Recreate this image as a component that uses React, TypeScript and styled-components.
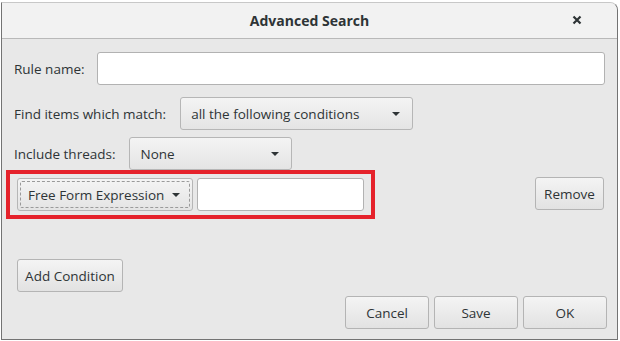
import React from "react";
import styled, { createGlobalStyle } from "styled-components";

const GlobalStyle = createGlobalStyle`
    html, body {
        margin: 0;
        padding: 0;
        background: #ffffff;
    }
    body {
        font-family: "Open Sans", "Noto Sans", sans-serif;
        font-size: 13.5px;
        color: #2e3436;
    }
`;

const Caret: React.FC = () => (
    <svg width="10" height="6" viewBox="0 0 10 6">
        <path d="M1 1 L9 1 L5 5 Z" fill="#2e3436" />
    </svg>
);

const App: React.FC = () => {
    return (
        <>
            <GlobalStyle />
            <Screen>
                <Window>
                    <TitleBar>
                        <Title>Advanced Search</Title>
                        <CloseButton type="button" aria-label="Close">
                            <svg width="10" height="10" viewBox="0 0 10 10">
                                <path d="M1.5 1.5 L8.5 8.5 M8.5 1.5 L1.5 8.5" stroke="#2e3436" strokeWidth="2.2" />
                            </svg>
                        </CloseButton>
                    </TitleBar>
                    <Body>
                        <Row $gap={12}>
                            <Label>Rule name:</Label>
                            <TextInput $grow />
                        </Row>
                        <Row $gap={14} $top={12}>
                            <Label>Find items which match:</Label>
                            <Dropdown $width={233}>
                                <span>all the following conditions</span>
                                <Caret />
                            </Dropdown>
                        </Row>
                        <Row $gap={14} $top={7}>
                            <Label>Include threads:</Label>
                            <Dropdown $width={163}>
                                <span>None</span>
                                <Caret />
                            </Dropdown>
                        </Row>
                        <ConditionRow>
                            <Highlight>
                                <Dropdown $width={176} $focused>
                                    <span>Free Form Expression</span>
                                    <Caret />
                                </Dropdown>
                                <TextInput $width={167} />
                            </Highlight>
                            <RemoveButton $width={69}>Remove</RemoveButton>
                        </ConditionRow>
                        <AddButton $width={106}>Add Condition</AddButton>
                        <Actions>
                            <Button $width={84}>Cancel</Button>
                            <Button $width={84}>Save</Button>
                            <Button $width={84}>OK</Button>
                        </Actions>
                    </Body>
                </Window>
            </Screen>
        </>
    );
};

const Screen = styled.div`
    width: 620px;
    height: 341px;
    padding: 2px 0 0 1px;
    box-sizing: border-box;
    background: #ffffff;
`;

const Window = styled.div`
    display: flex;
    flex-direction: column;
    width: 617px;
    height: 338px;
    box-sizing: border-box;
    border: 1px solid #737373;
    border-top-color: #c8c8c8;
    border-radius: 0 8px 0 0;
    background: #e8e8e8;
    overflow: hidden;
`;

const TitleBar = styled.div`
    position: relative;
    display: flex;
    align-items: center;
    justify-content: center;
    height: 35px;
    flex-shrink: 0;
    background: #f2f2f2;
    border-bottom: 1px solid #b9b9b9;
`;

const Title = styled.h1`
    margin: 0;
    font-size: 14px;
    font-weight: 700;
    color: #2e3436;
`;

const CloseButton = styled.button`
    position: absolute;
    right: 35px;
    top: 12px;
    display: flex;
    padding: 0;
    border: none;
    background: none;
`;

const Body = styled.div`
    display: flex;
    flex-direction: column;
    align-items: flex-start;
    flex: 1;
    padding: 13px 12px 0 12px;
`;

const Row = styled.div<{ $gap: number; $top?: number }>`
    display: flex;
    align-items: center;
    align-self: stretch;
    gap: ${(p) => p.$gap}px;
    margin-top: ${(p) => p.$top ?? 0}px;
`;

const Label = styled.span`
    white-space: nowrap;
`;

const TextInput = styled.div<{ $grow?: boolean; $width?: number }>`
    ${(p) => (p.$grow ? "flex: 1;" : `width: ${p.$width}px;`)}
    height: 33px;
    box-sizing: border-box;
    background: #ffffff;
    border: 1px solid #b2b2b2;
    border-radius: 3px;
`;

const Dropdown = styled.div<{ $width: number; $focused?: boolean }>`
    position: relative;
    display: flex;
    align-items: center;
    justify-content: space-between;
    width: ${(p) => p.$width}px;
    height: 33px;
    box-sizing: border-box;
    padding: 0 11px 0 10px;
    background: linear-gradient(#f4f4f4, #e4e4e4);
    border: 1px solid #b6b6b6;
    border-radius: 3px;
    white-space: nowrap;

    ${(p) =>
        p.$focused &&
        `
        &::after {
            content: "";
            position: absolute;
            inset: 2px;
            border: 1px dashed #9a9a9a;
            border-radius: 2px;
        }
    `}
`;

const ConditionRow = styled.div`
    display: flex;
    align-items: center;
    justify-content: space-between;
    align-self: stretch;
    margin-left: -8px;
    padding-right: 1px;
`;

const Highlight = styled.div`
    display: flex;
    gap: 4px;
    padding: 4px 7px;
    border: 4px solid #e5222b;
`;

const Button = styled.button<{ $width: number }>`
    width: ${(p) => p.$width}px;
    height: 33px;
    padding: 0;
    font-family: inherit;
    font-size: 13.5px;
    color: #2e3436;
    background: linear-gradient(#f4f4f4, #e2e2e2);
    border: 1px solid #b4b4b4;
    border-radius: 3px;
`;

const RemoveButton = styled(Button)`
    margin-bottom: 2px;
`;

const AddButton = styled(Button)`
    margin: 40px 0 0 3px;
`;

const Actions = styled.div`
    display: flex;
    gap: 5px;
    align-self: flex-end;
    margin: 4px -2px 0 0;
`;

export default App;
